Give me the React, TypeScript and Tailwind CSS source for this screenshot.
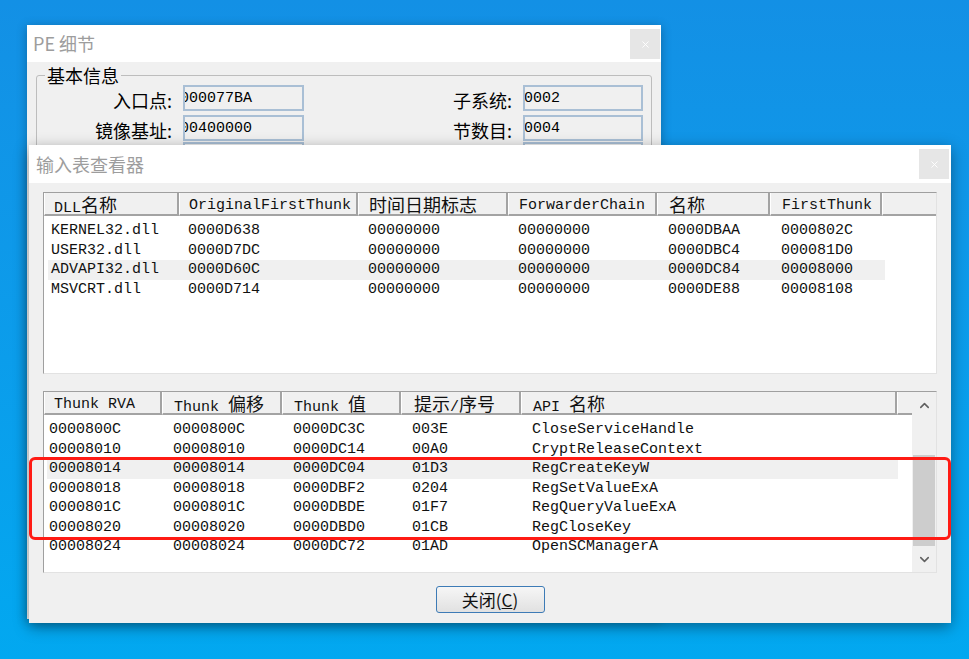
import { ChevronDown, ChevronUp, X } from "lucide-react";

const cjk = "font-['Noto_Sans_CJK_SC',sans-serif]";
const mono = "font-['Liberation_Mono','Noto_Sans_CJK_SC',monospace]";

// splits a label so CJK runs get the wider CJK face, ASCII stays mono
function Mix({ text }: { text: string }) {
  const parts = text.split(/([\u4e00-\u9fff]+)/);
  return (
    <span className="whitespace-pre">
      {parts.map((p, i) =>
        /[\u4e00-\u9fff]/.test(p) ? (
          <span key={i} className={`${cjk} text-[18px]`}>
            {p}
          </span>
        ) : (
          <span key={i}>{p}</span>
        )
      )}
    </span>
  );
}

const dllHead = [
  { t: "DLL名称", c: "w-[135px] pl-[9px]" },
  { t: "OriginalFirstThunk", c: "w-[179px] pl-[9px]" },
  { t: "时间日期标志", c: "w-[150px] pl-[10px]" },
  { t: "ForwarderChain", c: "w-[149px] pl-[10px]" },
  { t: "名称", c: "w-[113px] pl-[11px]" },
  { t: "FirstThunk", c: "w-[112px] pl-[11px]" },
];
const dllCols = ["w-[140px] pl-[3px]", "w-[180px]", "w-[150px]", "w-[150px]", "w-[113px]", "flex-1"];

const dlls = [
  ["KERNEL32.dll", "0000D638", "00000000", "00000000", "0000DBAA", "0000802C"],
  ["USER32.dll", "0000D7DC", "00000000", "00000000", "0000DBC4", "000081D0"],
  ["ADVAPI32.dll", "0000D60C", "00000000", "00000000", "0000DC84", "00008000"],
  ["MSVCRT.dll", "0000D714", "00000000", "00000000", "0000DE88", "00008108"],
];

const thunkHead = [
  { t: "Thunk RVA", c: "w-[118px] pl-[9px]" },
  { t: "Thunk 偏移", c: "w-[120px] pl-[11px]" },
  { t: "Thunk 值", c: "w-[119px] pl-[11px]" },
  { t: "提示/序号", c: "w-[120px] pl-[12px]" },
  { t: "API 名称", c: "w-[376px] pl-[11px]" },
];
const thunkCols = ["w-[126px] pl-[2px]", "w-[120px]", "w-[119px]", "w-[120px]", "flex-1"];

const thunks = [
  ["0000800C", "0000800C", "0000DC3C", "003E", "CloseServiceHandle"],
  ["00008010", "00008010", "0000DC14", "00A0", "CryptReleaseContext"],
  ["00008014", "00008014", "0000DC04", "01D3", "RegCreateKeyW"],
  ["00008018", "00008018", "0000DBF2", "0204", "RegSetValueExA"],
  ["0000801C", "0000801C", "0000DBDE", "01F7", "RegQueryValueExA"],
  ["00008020", "00008020", "0000DBD0", "01CB", "RegCloseKey"],
  ["00008024", "00008024", "0000DC72", "01AD", "OpenSCManagerA"],
];

function HeadCell({ t, c }: { t: string; c: string }) {
  return (
    <div className={`${c} flex h-full shrink-0 items-center border-l border-white border-r-2 border-r-[#a3a3a3] border-b-2 border-b-[#a3a3a3] bg-[#f0f0f0] pt-[3px] leading-none whitespace-nowrap`}>
      <Mix text={t} />
    </div>
  );
}

function Field({ value, shift }: { value?: string; shift?: boolean }) {
  return (
    <div className="flex h-[26px] items-center overflow-hidden border-2 border-[#a9bfd5] bg-[#f0f0f0]">
      {value && <span className={`${mono} text-[15px] leading-none text-black ${shift ? "-ml-[5px]" : "-ml-[1px]"}`}>{value}</span>}
    </div>
  );
}

function PeRow({ l, lv, r, rv, className }: { l?: string; lv?: string; r?: string; rv?: string; className?: string }) {
  return (
    <div className={`flex h-[26px] items-center ${className ?? ""}`}>
      <div className={`${cjk} w-[135px] pt-[3px] text-right text-[18px] leading-none text-black`}>{l && `${l}:`}</div>
      <div className="ml-[11px] w-[121px]">
        <Field value={lv} shift />
      </div>
      <div className={`${cjk} w-[208px] pt-[3px] text-right text-[18px] leading-none text-black`}>{r && `${r}:`}</div>
      <div className="ml-[11px] w-[120px]">
        <Field value={rv} />
      </div>
    </div>
  );
}

export default function App() {
  return (
    <div className="relative h-[659px] w-[969px] overflow-hidden bg-linear-to-b from-[#1390e5] to-[#02a8f0] font-['Liberation_Sans','Noto_Sans_CJK_SC',sans-serif]">
      {/* PE 细节 window, behind */}
      <div className="absolute left-[27px] top-[25px] h-[594px] w-[634px] bg-[#f0f0f0] shadow-[0_2px_10px_rgba(0,0,0,0.3)]">
        <div className="relative flex h-[37px] items-center bg-white pl-[6px]">
          <span className={`${cjk} text-[18px] text-[#9d9d9d]`}>PE 细节</span>
          <div className="absolute right-[1px] top-[4px] flex h-[30px] w-[30px] items-center justify-center bg-[#e6e6e6]">
            <X size={11} strokeWidth={2} className="text-white" />
          </div>
        </div>
        <fieldset className="mx-[9px] mt-[3px] rounded-[3px] border border-[#bdbdbd] pb-[10px]">
          <legend className={`${cjk} ml-[8px] px-[2px] text-[18px] leading-[20px] text-black`}>基本信息</legend>
          <PeRow l="入口点" lv="000077BA" r="子系统" rv="0002" />
          <PeRow l="镜像基址" lv="00400000" r="节数目" rv="0004" className="mt-[4px]" />
          <PeRow className="mt-[1px]" />
        </fieldset>
      </div>

      {/* 输入表查看器 window */}
      <div className="absolute left-[29px] top-[145px] flex h-[478px] w-[922px] flex-col bg-[#f0f0f0] shadow-[0_4px_14px_rgba(0,0,0,0.4)]">
        <div className="relative flex h-[38px] shrink-0 items-center bg-white pl-[7px]">
          <span className={`${cjk} text-[18px] text-[#9d9d9d]`}>输入表查看器</span>
          <div className="absolute right-[2px] top-[4px] flex h-[30px] w-[30px] items-center justify-center bg-[#e6e6e6]">
            <X size={11} strokeWidth={2} className="text-white" />
          </div>
        </div>

        {/* DLL list */}
        <div className={`${mono} mx-[14px] mt-[9px] h-[182px] border border-l-[#9f9f9f] border-t-[#9f9f9f] border-r-[#e2e2e2] border-b-[#e2e2e2] bg-white text-[15px] text-[#111]`}>
          <div className="flex h-[23px]">
            {dllHead.map((h) => (
              <HeadCell key={h.t} t={h.t} c={h.c} />
            ))}
            <div className="h-full flex-1 border-l border-white border-b-2 border-b-[#a3a3a3] bg-[#f0f0f0]" />
          </div>
          <div className="pt-[5px]">
            {dlls.map((row, i) => (
              <div key={row[0]} className={`ml-[4px] flex h-[19.5px] w-[837px] items-center leading-[19.5px] ${i === 2 ? "bg-[#f0f0f0]" : ""}`}>
                {row.map((v, j) => (
                  <div key={j} className={`${dllCols[j]} shrink-0 whitespace-nowrap`}>
                    {v}
                  </div>
                ))}
              </div>
            ))}
          </div>
        </div>

        {/* thunk list */}
        <div className={`${mono} mx-[14px] mt-[17px] flex h-[182px] border border-l-[#9f9f9f] border-t-[#9f9f9f] border-r-[#e2e2e2] border-b-[#e2e2e2] bg-white text-[15px] text-[#111]`}>
          <div className="flex-1">
            <div className="flex h-[23px]">
              {thunkHead.map((h) => (
                <HeadCell key={h.t} t={h.t} c={h.c} />
              ))}
              <div className="h-full flex-1 border-l border-white border-b-2 border-b-[#a3a3a3] bg-[#f0f0f0]" />
            </div>
            <div className="pt-[5px]">
              {thunks.map((row, i) => (
                <div key={row[0]} className={`ml-[3px] flex h-[19.5px] w-[851px] items-center leading-[19.5px] ${i === 2 ? "bg-[#f0f0f0]" : ""}`}>
                  {row.map((v, j) => (
                    <div key={j} className={`${thunkCols[j]} shrink-0 whitespace-nowrap`}>
                      {v}
                    </div>
                  ))}
                </div>
              ))}
            </div>
          </div>
          <div className="flex w-[24px] flex-col bg-[#f0f0f0]">
            <div className="flex h-[27px] items-center justify-center">
              <ChevronUp size={15} strokeWidth={2.5} className="text-[#606060]" />
            </div>
            <div className="flex-1">
              <div className="mx-[1px] mt-[37px] h-[91px] bg-[#cdcdcd]" />
            </div>
            <div className="flex h-[27px] items-center justify-center">
              <ChevronDown size={15} strokeWidth={2.5} className="text-[#606060]" />
            </div>
          </div>
        </div>

        <button className={`${cjk} mx-auto mt-[13px] flex h-[27px] w-[109px] items-center justify-center rounded-[3px] border border-[#3d7bb6] bg-linear-to-b from-[#f6f6f6] to-[#e1e1e1] text-[17px] leading-none text-[#111]`}>
          关闭(<span className="underline">C</span>)
        </button>
      </div>

      {/* red annotation box */}
      <div className="absolute left-[29px] top-[457px] h-[83px] w-[922px] rounded-[6px] border-[3px] border-[#ff1b14]" />
    </div>
  );
}
